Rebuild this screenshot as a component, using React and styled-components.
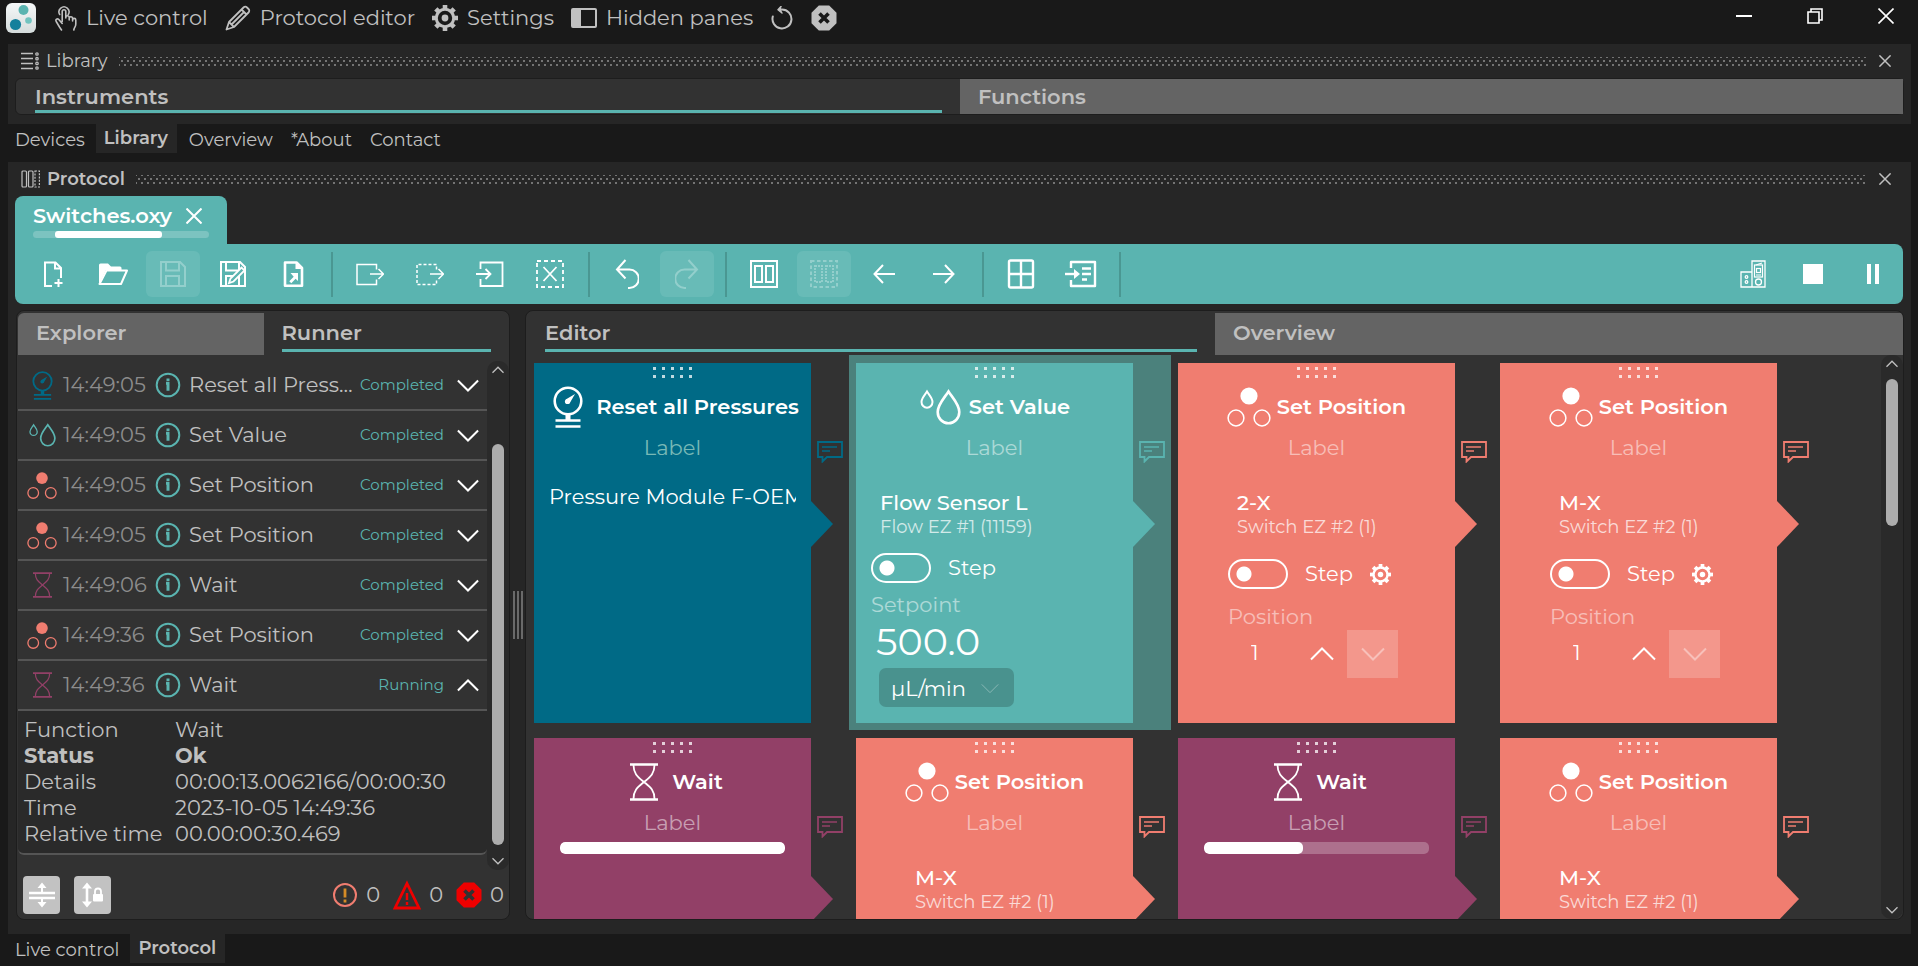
import React from "react";
import styled, { createGlobalStyle, css } from "styled-components";

const c = {
  window: "#191919",
  dock: "#262626",
  panel: "#323232",
  sunken: "#2a2a2a",
  edge: "#1d1d1d",
  tab: "#646464",
  text: "#c0c0c0",
  dim: "#8c8c8c",
  teal: "#5ab4b0",
  tealDark: "#4b817c",
  blue: "#006a86",
  salmon: "#f07d70",
  plum: "#924067",
};

const GlobalStyle = createGlobalStyle`
  *, *::before, *::after { box-sizing: border-box; }
  html, body, #root { height: 100%; }
  body {
    margin: 0;
    background: ${c.window};
    color: ${c.text};
    font: 400 21px/26px Montserrat, Inter, "Open Sans", sans-serif;
    overflow: hidden;
  }
  button, input, select { font: inherit; color: inherit; margin: 0; }
  button { border: 0; padding: 0; background: none; cursor: pointer; }
  h2, h3, p, ul { margin: 0; padding: 0; font: inherit; }
  svg { display: block; flex: none; }
`;

/* ---------- icons ---------- */

const Svg = ({ w = 26, h = w, vb = `0 0 ${w} ${h}`, sw = 2, children, ...rest }) => (
  <svg width={w} height={h} viewBox={vb} fill="none" stroke="currentColor" strokeWidth={sw} aria-hidden="true" {...rest}>
    {children}
  </svg>
);

const Logo = () => (
  <svg width="30" height="30" viewBox="0 0 30 30" aria-hidden="true">
    <defs>
      <linearGradient id="logoPlate" x1="0" y1="0" x2="0" y2="1">
        <stop offset="0" stopColor="#f6f8f8" />
        <stop offset="1" stopColor="#d5dcdc" />
      </linearGradient>
    </defs>
    <rect width="30" height="30" rx="6" fill="url(#logoPlate)" />
    <circle cx="17.500" cy="7" r="5" fill="#5ab4b0" />
    <circle cx="22.500" cy="17.500" r="3.300" fill="#71c3bf" />
    <circle cx="9.500" cy="21.500" r="5.600" fill="#14809c" />
  </svg>
);
const HandIcon = () => (
  <Svg w={22} h={26} sw={1.600} strokeLinecap="round" strokeLinejoin="round">
    <path d="M4.700 9.500a5 5 0 1 1 8.600 0" />
    <path d="M7.200 16.500V6.500a1.800 1.800 0 0 1 3.600 0V13M10.800 12.500a1.700 1.700 0 0 1 3.400 0V15M14.200 13.500a1.700 1.700 0 0 1 3.400 0V16M17.600 15a1.600 1.600 0 0 1 3.200 0v4c0 3-1.500 3-2 6M7.200 18.500 3.800 14.500c-1.500-1.500-3.600 0-2.600 2L4.500 22l2 3" />
  </Svg>
);
const PencilIcon = () => (
  <Svg w={26} h={26} sw={1.800} strokeLinejoin="round">
    <path d="M1.500 24.500l2.500-7.500L18.500 2.500c1-1 2.500-1 3.500 0l1.500 1.500c1 1 1 2.500 0 3.500L9 22zM4 17l5 5M16.500 4.500l5 5M6.500 19.500 19.500 6.500" />
  </Svg>
);
const GearIcon = ({ size = 26 }) => (
  <Svg w={size} vb="0 0 26 26" sw={3}>
    <circle cx="13" cy="13" r="8.700" />
    <circle cx="13" cy="13" r="3.400" fill="currentColor" stroke="none" />
    {[0, 45, 90, 135, 180, 225, 270, 315].map((a) => (
      <path key={a} d="M13 0v4" strokeWidth="4.600" transform={`rotate(${a} 13 13)`} />
    ))}
  </Svg>
);
const PanesIcon = () => (
  <Svg w={26} h={20}>
    <rect x="1" y="1" width="24" height="18" rx="1" />
    <path d="M2 2h7v16H2z" fill="currentColor" />
  </Svg>
);
const RestoreIcon = () => (
  <Svg w={24} h={24} strokeLinecap="round">
    <path d="M12 3.500a9.500 9.500 0 1 1-9.200 7" />
    <path d="M11 .5 8 3.700l4 3.300" fill="currentColor" strokeWidth="1.500" strokeLinejoin="round" />
  </Svg>
);
const OctXIcon = ({ cut = c.window, size = 26 }) => (
  <Svg w={size} vb="0 0 26 26">
    <path d="M7.800.5h10.400l7.300 7.300v10.400l-7.300 7.300H7.800L.5 18.200V7.800z" fill="currentColor" stroke="none" />
    <path d="M8.500 8.500l9 9m0-9-9 9" stroke={cut} strokeWidth="3.600" />
  </Svg>
);
const CrossIcon = ({ size = 12, sw = 1.500 }) => (
  <Svg w={size} vb="0 0 16 16" sw={(sw * 16) / size}>
    <path d="M.5.5l15 15m0-15-15 15" />
  </Svg>
);
const LibraryIcon = () => (
  <Svg w={18} h={18} sw={1.300}>
    <path d="M0 1.500h12M0 6.500h12M0 11.500h12M0 16.500h12" />
    <circle cx="16" cy="2" r="1.200" /><circle cx="16" cy="6.700" r="1.200" /><circle cx="16" cy="11.400" r="1.200" /><circle cx="16" cy="16" r="1.200" />
  </Svg>
);
const ProtocolIcon = () => (
  <Svg w={19} h={18} sw={1.200}>
    <rect x="1" y="1" width="4.500" height="16" rx="1" />
    <rect x="7.500" y="1" width="4.500" height="16" rx="1" />
    <rect x="14" y="1" width="4.400" height="16" strokeDasharray="2 1.300" />
  </Svg>
);
const Chevron = ({ up, w = 22, sw = 2 }) => (
  <Svg w={w} h={w / 2 + 2} vb="0 0 24 14" sw={(sw * 24) / w}>
    <path d={up ? "M1 12.500l11-11 11 11" : "M1 1.500l11 11 11-11"} />
  </Svg>
);
const NewIcon = () => (
  <Svg w={28}>
    <path d="M13 26H6V2.500h10.500L22 8v10M16 3v5.500h6M19.500 19v8M15.500 23h8" />
  </Svg>
);
const OpenIcon = () => (
  <Svg w={30} h={24}>
    <path d="M1 22V3q0-1.500 1.500-1.500H10l3 3h9q1.500 0 1.500 1.500v2H8z" fill="currentColor" stroke="none" />
    <path d="M1.500 22 8.500 8.500H29L23 22z" strokeLinejoin="round" />
  </Svg>
);
const SaveIcon = ({ edit }) => (
  <Svg w={28}>
    <path d="M2 2h19l5 5v19H2zM7 2v8.500h13V2M7 26V16h13v10" />
    {edit && <path d="M10 23l1.500-4.500L22.500 7.500l3 3L14.500 21.500z" fill={c.teal} strokeWidth="1.800" />}
  </Svg>
);
const ExportDocIcon = () => (
  <Svg w={28} sw={2.600}>
    <path d="M6 2.500h11.500L23 8v17.700H6z" strokeLinejoin="round" />
    <path d="M16.500 2.500V9H23z" fill="currentColor" stroke="none" />
    <path d="M11.500 13H19v8l-2.400-2.300-4.300 4.600-2-2 4.400-4.600z" fill="currentColor" stroke="none" />
  </Svg>
);
const SendIcon = ({ dashed }) => (
  <Svg w={28} sw={1.500}>
    <path d="M20.500 9.500v-5H1v20h19.500v-5" strokeDasharray={dashed ? "3 2" : undefined} />
    <path d="M14 14h13M22.500 9l5 5-5 5" />
  </Svg>
);
const InsertIcon = () => (
  <Svg w={28} sw={1.800}>
    <path d="M4.500 9V2.500h22V26h-22v-7" />
    <path d="M0 14h14M9.500 9l5 5-5 5" />
  </Svg>
);
const DeleteIcon = () => (
  <Svg w={28} sw={1.800}>
    <rect x="1" y="1" width="26" height="26" strokeDasharray="4 3" />
    <path d="M7.500 7l13 14M20.500 7l-13 14" />
  </Svg>
);
const UndoIcon = ({ flip }) => (
  <Svg w={24} h={30} sw={2} transform={flip ? "scale(-1 1)" : undefined}>
    <path d="M10.500 1 2 10.500l8.500 9M2 10.500h12.500a8.500 8.500 0 1 1 0 18.500H13" />
  </Svg>
);
const ColumnsIcon = ({ dashed }) => (
  <Svg w={28} sw={2}>
    <rect x="1" y="1" width="26" height="26" strokeDasharray={dashed ? "3.500 2.500" : undefined} />
    <path d="M5 6h7v16H5zM16 6h7v16h-7z" strokeDasharray={dashed ? "2 1" : undefined} />
  </Svg>
);
const ArrowIcon = ({ right }) => (
  <Svg w={22} h={20} sw={2} transform={right ? "scale(-1 1)" : undefined}>
    <path d="M10 1 1.500 10l8.500 9M1.500 10H22" />
  </Svg>
);
const GridIcon = () => (
  <Svg w={28} h={30} sw={2.400}>
    <rect x="2" y="1.500" width="24" height="27" rx="1.500" />
    <path d="M14 2v26M2 15h24" />
  </Svg>
);
const IntoListIcon = () => (
  <Svg w={32} h={28} sw={2.400}>
    <path d="M6 8V2h24v24H6v-6" strokeLinejoin="round" />
    <path d="M0 14h10" />
    <path d="M9 9l6 5-6 5z" fill="currentColor" stroke="none" />
    <path d="M17 8.500h9M17 14h9M17 19.500h5" />
  </Svg>
);
const DevicesIcon = () => (
  <Svg w={26} h={28} sw={1.300}>
    <path d="M12 1h13v26H12zM1 12h11v15H1z" />
    <rect x="14.500" y="5" width="8" height="12" strokeWidth="1.200" />
    <rect x="16.500" y="8.500" width="4" height="4" strokeWidth="1.200" />
    <path d="M16 5l6-2M16 15h5" strokeWidth="1.200" />
    <circle cx="18.500" cy="22" r="3" />
    <circle cx="6.500" cy="17" r="1.300" /><circle cx="6.500" cy="22" r="1.300" />
  </Svg>
);
const StopIcon = () => <Svg w={20}><path d="M0 0h20v20H0z" fill="currentColor" stroke="none" /></Svg>;
const PauseIcon = () => <Svg w={12} h={20}><path d="M0 0h4v20H0zM8 0h4v20H8z" fill="currentColor" stroke="none" /></Svg>;
const InfoIcon = () => (
  <Svg w={26} sw={2}>
    <circle cx="13" cy="13" r="11.300" />
    <path d="M11 11.200h2v7.600M13 6.500v2.600" strokeWidth="3" />
  </Svg>
);

const GaugeIcon = ({ big }) => (
  <Svg w={big ? 30 : 21} h={big ? 42 : 29} vb="0 0 30 42" sw={2.600}>
    <circle cx="15" cy="15" r="13.300" />
    <circle cx="14.500" cy="15.500" r="2.600" fill="currentColor" stroke="none" />
    <path d="M12.700 13.500 22 8l-5.500 9.500z" fill="currentColor" stroke="none" />
    <path d="M15 28v6" strokeWidth="5" />
    <path d="M2.500 34.500h25M2.500 40.500h25" />
  </Svg>
);
const DropsIcon = ({ big }) => (
  <Svg w={big ? 41 : 27} h={big ? 36 : 24} vb="0 0 41 36" sw={2.600}>
    <path d="M28.500 2.500c4 6.200 10.800 13 10.800 20.500a10.800 11.300 0 0 1-21.600 0c0-7.500 6.800-14.300 10.800-20.500z" />
    <path d="M7 2.500c2 3.500 5.500 6.500 5.500 10.500a5.500 5.700 0 0 1-11 0c0-4 3.500-7 5.500-10.500z" strokeWidth="2" />
  </Svg>
);
const ValveIcon = ({ big }) => (
  <Svg w={big ? 44 : 30} h={big ? 40 : 27} vb="0 0 44 40" sw={big ? 1.500 : 1.900}>
    <circle cx="22" cy="9" r="8.600" fill="currentColor" stroke="none" />
    <circle cx="9" cy="31" r="7.900" />
    <circle cx="35" cy="31" r="7.900" />
  </Svg>
);
const HourglassIcon = ({ big }) => (
  <Svg w={big ? 28 : 19} h={big ? 38 : 26} vb="0 0 28 38" sw={1.800}>
    <path d="M0 1.500h28M0 36.500h28" strokeWidth="2.600" />
    <path d="M3.500 2c0 9 4.500 12 10.500 17 6-5 10.500-8 10.500-17M3.500 36c0-9 4.500-12 10.500-17 6 5 10.500 8 10.500 17" />
  </Svg>
);
const CommentIcon = () => (
  <Svg w={26} h={22} sw={1.800}>
    <path d="M1 1h24v15H10l-4.500 4.500V16H1z" />
    <path d="M5 6h15M5 10h8" strokeWidth="1.600" />
  </Svg>
);
const CollapseIcon = () => (
  <Svg w={26}>
    <path d="M0 11h26M0 16h26" strokeWidth="2.400" />
    <path d="M13 5v5M13 17v5" />
    <path d="M8.500 6 13 .5 17.500 6zM8.500 20l4.500 5.500L17.500 20z" fill="currentColor" stroke="none" />
  </Svg>
);
const ScrollLockIcon = () => (
  <Svg w={22} h={26}>
    <path d="M5 5v16" strokeWidth="2.600" />
    <path d="M0 6.500 5 .5l5 6zM0 19.500l5 6 5-6z" fill="currentColor" stroke="none" />
    <rect x="11" y="12" width="10" height="7.500" rx="1" fill="currentColor" stroke="none" />
    <path d="M13 13V9.500a3 3 0 0 1 6 0V13" strokeWidth="1.800" />
  </Svg>
);
const AlertIcon = () => (
  <Svg w={26}>
    <circle cx="13" cy="13" r="11" />
    <path d="M13 6.500v9M13 17.500v3" stroke="#d58b26" strokeWidth="2.800" />
  </Svg>
);
const TriangleIcon = () => (
  <Svg w={28} h={30} sw={2.800}>
    <path d="M14 3.500 26 28H2z" />
    <path d="M14 13v7M14 22v3" strokeWidth="2.400" />
  </Svg>
);

/* ---------- shell ---------- */

const Shell = styled.div`
  height: 100vh;
  display: flex;
  flex-direction: column;
`;
const TitleBar = styled.header`
  height: 44px;
  flex: none;
  display: flex;
  align-items: flex-start;
  padding: 3px 20px 0 6px;
`;
const Menu = styled.nav`
  display: flex;
  align-items: center;
  gap: 17px;
  height: 30px;
  margin-left: 19px;
  flex: 1;
`;
const MenuButton = styled.button`
  display: flex;
  align-items: center;
  gap: 9px;
  white-space: nowrap;
`;
const WindowButtons = styled.div`
  display: flex;
  height: 26px;
  align-items: center;
  gap: 55px;
  color: #fff;
  padding-right: 4px;
`;
const Dock = styled.section`
  margin: 0 7px 0 8px;
  padding: 0 7px;
  background: ${c.dock};
  display: flex;
  flex-direction: column;
  ${(p) => (p.$fill ? "flex: 1; min-height: 0; padding-bottom: 14px;" : "flex: none; padding-bottom: 9px;")}
`;
const DockHeader = styled.header`
  height: 34px;
  flex: none;
  display: flex;
  align-items: center;
  gap: 7px;
  padding: 0 13px 0 6px;
  font-size: 18px;
`;
const DockTitle = styled.h2`
  font-weight: ${(p) => (p.$strong ? 600 : 400)};
`;
const Grip = styled.span`
  flex: 1;
  height: 9px;
  margin: 0 6px 0 4px;
  background:
    radial-gradient(circle, #747474 1px, transparent 1px) 0 0 / 6px 8px,
    radial-gradient(circle, #747474 1px, transparent 1px) 3px 4px / 6px 8px;
`;
const DockTabs = styled.nav`
  flex: none;
  display: flex;
  align-items: flex-start;
  padding-left: 6px;
  height: ${(p) => p.$height}px;
  font-size: 18px;
`;
const DockTab = styled.a`
  display: block;
  color: ${c.text};
  text-decoration: none;
  height: 29px;
  ${(p) =>
    p.$active
      ? css`
          background: ${c.dock};
          font-weight: 600;
          line-height: 28px;
          padding: 0 9px 0 8px;
          margin: 0 3px 0 2px;
        `
      : css`
          line-height: 32px;
          padding: 0 9px;
        `}
`;

const TabRow = styled.div`
  flex: none;
  display: flex;
  height: ${(p) => p.$height}px;
`;
const Tab = styled.button`
  flex: 1 1 0;
  display: flex;
  align-items: flex-start;
  text-align: left;
  padding: 0 18px;
  font-weight: 600;
  background: ${(p) => (p.$active ? "none" : c.tab)};
  &:first-child { border-top-left-radius: 6px; }
  span {
    flex: 1;
    display: flex;
    align-items: center;
    height: calc(100% - ${(p) => p.$inset}px);
    border-bottom: 3px solid ${(p) => (p.$active ? c.teal : "transparent")};
    padding-top: 4px;
  }
`;
const LibraryTabs = styled.div`
  background: ${c.panel};
  border: 1px solid ${c.edge};
  border-radius: 6px;
  padding-left: 1px;
`;

/* ---------- protocol file tab and toolbar ---------- */

const FileTab = styled.div`
  flex: none;
  width: 212px;
  height: 48px;
  padding: 7px 18px;
  border-radius: 8px 8px 0 0;
  background: ${c.teal};
  color: #fff;
`;
const FileTabTop = styled.div`
  display: flex;
  align-items: center;
  gap: 14px;
  font-weight: 600;
`;
const Track = styled.div`
  height: 7px;
  margin-top: 2px;
  border-radius: 4px;
  background: #7cc3c0;
  padding-left: 22px;
`;
const TrackFill = styled.div`
  width: 107px;
  height: 7px;
  border-radius: 3px;
  background: #fff;
`;
const Toolbar = styled.div`
  flex: none;
  height: 60px;
  margin-right: 1px;
  padding: 0 3px 0 11px;
  display: flex;
  align-items: center;
  gap: 6px;
  border-radius: 0 8px 8px 8px;
  background: ${c.teal};
  color: #fff;
`;
const ToolButton = styled.button`
  width: 54px;
  height: 46px;
  display: grid;
  place-items: center;
  border-radius: 6px;
  &:disabled {
    background: #68bbb7;
    color: #93cfcc;
  }
`;
const ToolRule = styled.i`
  width: 2px;
  height: 45px;
  margin: 0 4px 0 5px;
  background: #4a9792;
`;
const Spacer = styled.div`
  flex: 1;
`;

/* ---------- workspace ---------- */

const Workspace = styled.div`
  flex: 1;
  min-height: 0;
  display: flex;
  padding: 6px 0 0 1px;
`;
const Panel = styled.section`
  display: flex;
  flex-direction: column;
  min-height: 0;
  min-width: 0;
  background: ${c.panel};
  border: 1px solid ${c.edge};
  border-radius: 8px;
  padding: 2px 0 0 1px;
  overflow: hidden;
  ${(p) => (p.$width ? `flex: 0 0 ${p.$width}px;` : "flex: 1;")}
`;
const Splitter = styled.div`
  width: 15px;
  flex: none;
  display: flex;
  justify-content: center;
  align-items: center;
  gap: 2px;
  i {
    width: 2px;
    height: 48px;
    background: #6a6a6a;
  }
`;
const ScrollArea = styled.div`
  flex: 1;
  min-height: 0;
  display: flex;
`;
const Bar = styled.div`
  width: 22px;
  flex: none;
  margin-top: ${(p) => p.$top}px;
  padding: 5px 0;
  display: flex;
  flex-direction: column;
  align-items: center;
  justify-content: space-between;
  background: ${c.sunken};
  border-radius: 10px;
`;
const BarTrack = styled.div`
  flex: 1;
  padding-top: ${(p) => p.$offset}px;
`;
const Thumb = styled.div`
  width: 12px;
  height: ${(p) => p.$size}px;
  border-radius: 6px;
  background: #adadad;
`;

const LogList = styled.ul`
  flex: 1;
  min-width: 0;
  list-style: none;
  padding-top: 6px;
`;
const LogItem = styled.li`
  height: 50px;
  border-bottom: 2px solid #555;
  display: grid;
  grid-template-columns: 45px 92px 34px minmax(0, 1fr) auto 43px;
  align-items: center;
`;
const LogIcon = styled.span`
  display: grid;
  place-items: center;
  padding-left: 3px;
  color: ${(p) => p.$color};
`;
const LogTime = styled.time`
  color: ${c.dim};
`;
const LogInfo = styled.span`
  color: ${c.teal};
`;
const LogName = styled.span`
  overflow: hidden;
  text-overflow: ellipsis;
  white-space: nowrap;
`;
const LogState = styled.span`
  padding-left: 5px;
  font-size: 15px;
  color: ${c.teal};
`;
const LogToggle = styled.button`
  color: #fff;
  display: grid;
  justify-content: end;
  padding-right: 8px;
`;
const Details = styled.li`
  height: 144px;
  padding: 6px 0 0 6px;
  background: ${c.sunken};
  border-bottom: 2px solid #555;
  border-radius: 0 0 6px 6px;
  table { border-collapse: collapse; }
  th, td { padding: 0; height: 26px; text-align: left; font-weight: inherit; white-space: nowrap; }
  th { width: 151px; }
`;
const DetailRow = styled.tr`
  font-weight: ${(p) => (p.$strong ? 700 : 400)};
`;
const LogFooter = styled.footer`
  flex: none;
  height: 49px;
  padding: 0 5px;
  display: flex;
  align-items: center;
`;
const SquareButton = styled.button`
  width: 37px;
  height: 38px;
  margin-right: 14px;
  display: grid;
  place-items: center;
  border-radius: 4px;
  background: #c2c2c2;
  color: #fff;
`;
const Counter = styled.span`
  display: flex;
  align-items: center;
  gap: 8px;
  margin-left: 13px;
  svg { color: ${(p) => p.$color}; }
`;

/* ---------- step cards ---------- */

const Board = styled.div`
  flex: 1;
  min-width: 0;
  min-height: 0;
  overflow: hidden;
  display: grid;
  grid-template-columns: repeat(auto-fill, 322px);
  grid-auto-rows: 375px;
`;
const Cell = styled.div`
  display: flex;
  padding: 8px 0 7px 7px;
  color: ${(p) => p.$color};
  background: ${(p) => (p.$selected ? c.tealDark : "none")};
`;
const Card = styled.article`
  width: 277px;
  height: 360px;
  flex: none;
  background: ${(p) => p.$color};
  color: #fff;
`;
const Handle = styled.div`
  width: 40px;
  height: 12px;
  margin: 4px auto 7px;
  background: conic-gradient(from 270deg at 3px 3px, rgba(255, 255, 255, 0.75) 90deg, transparent 0) 0 0 / 9px 8px;
`;
const CardTitle = styled.h3`
  height: 42px;
  display: flex;
  align-items: center;
  justify-content: center;
  gap: 6px;
  font-weight: 600;
  white-space: nowrap;
`;
const CardIcon = styled.span`
  width: 44px;
  display: grid;
  place-items: center;
`;
const LabelInput = styled.input`
  display: block;
  width: 100%;
  height: 30px;
  margin-top: 4px;
  padding: 0;
  border: 0;
  background: none;
  text-align: center;
  &::placeholder { color: ${(p) => p.$tint || "rgba(255, 255, 255, 0.5)"}; opacity: 1; }
`;
const CardBody = styled.div`
  padding: ${(p) => p.$top}px 15px 0 ${(p) => p.$left}px;
`;
const Clipped = styled.p`
  overflow: hidden;
  white-space: nowrap;
`;
const Device = styled.div`
  padding-left: 9px;
  strong { display: block; font-weight: 500; line-height: 24px; }
  span { display: block; font-size: 18px; line-height: 25px; opacity: 0.72; }
`;
const StepRow = styled.label`
  display: flex;
  align-items: center;
  gap: 17px;
  margin-top: ${(p) => p.$top}px;
`;
const Switch = styled.input`
  appearance: none;
  width: 60px;
  height: 30px;
  border: 2px solid #fff;
  border-radius: 15px;
  background: radial-gradient(circle at 14px 13px, #fff 7px, transparent 8px);
`;
const FieldLabel = styled.label`
  display: block;
  margin-top: ${(p) => p.$top}px;
  opacity: 0.5;
`;
const BigInput = styled.input`
  display: block;
  width: 150px;
  height: 44px;
  margin-top: 1px;
  padding: 0 0 0 5px;
  border: 0;
  background: none;
  font-size: 38px;
`;
const UnitBox = styled.div`
  position: relative;
  width: 135px;
  margin: 5px 0 0 8px;
  svg { position: absolute; right: 15px; top: 15px; opacity: 0.35; }
`;
const UnitSelect = styled.select`
  appearance: none;
  width: 100%;
  height: 39px;
  padding: 2px 12px 0;
  border: 0;
  border-radius: 7px;
  background: #49928e;
  color: #fff;
`;
const Stepper = styled.div`
  display: flex;
  align-items: center;
  height: 48px;
  input {
    width: 68px;
    padding: 0 0 3px 23px;
    border: 0;
    background: none;
  }
`;
const StepButton = styled.button`
  width: 51px;
  height: 48px;
  display: grid;
  place-items: center;
  &:disabled { background: rgba(255, 255, 255, 0.2); color: rgba(255, 255, 255, 0.4); }
`;
const WaitBar = styled.div`
  height: 12px;
  margin: 5px 26px 0;
  border-radius: 5px;
  overflow: hidden;
  background: rgba(255, 255, 255, 0.25);
`;
const WaitFill = styled.div`
  height: 12px;
  border-radius: 5px;
  background: #fff;
`;
const CardSide = styled.div`
  padding-top: 78px;
  display: flex;
  flex-direction: column;
  gap: 38px;
`;
const NoteButton = styled.button`
  margin-left: 6px;
`;
const Pointer = styled.i`
  width: 22px;
  height: 46px;
  background: currentColor;
  clip-path: polygon(0 0, 100% 50%, 0 100%);
`;

const kinds = {
  reset: { name: "Reset all Pressures", color: c.blue, tint: "#78b9b6", Icon: GaugeIcon },
  value: { name: "Set Value", color: c.teal, Icon: DropsIcon },
  position: { name: "Set Position", color: c.salmon, Icon: ValveIcon },
  wait: { name: "Wait", color: c.plum, Icon: HourglassIcon },
};

const ResetBody = () => (
  <CardBody $top={22} $left={15}>
    <Clipped>Pressure Module F-OEM</Clipped>
  </CardBody>
);

const ValueBody = ({ id }) => (
  <CardBody $top={29} $left={15}>
    <Device>
      <strong>Flow Sensor L</strong>
      <span>Flow EZ #1 (11159)</span>
    </Device>
    <StepRow $top={13}>
      <Switch type="checkbox" /> Step
    </StepRow>
    <FieldLabel $top={9} htmlFor={id}>Setpoint</FieldLabel>
    <BigInput id={id} defaultValue="500.0" />
    <UnitBox>
      <UnitSelect aria-label="Unit">
        <option>µL/min</option>
      </UnitSelect>
      <Chevron w={18} sw={1} />
    </UnitBox>
  </CardBody>
);

const PositionBody = ({ id, device }) => (
  <CardBody $top={29} $left={50}>
    <Device>
      <strong>{device}</strong>
      <span>Switch EZ #2 (1)</span>
    </Device>
    <StepRow $top={19}>
      <Switch type="checkbox" /> Step <GearIcon size={21} />
    </StepRow>
    <FieldLabel $top={15} htmlFor={id}>Position</FieldLabel>
    <Stepper>
      <input id={id} defaultValue="1" />
      <StepButton aria-label="Increase"><Chevron up w={24} sw={2} /></StepButton>
      <StepButton aria-label="Decrease" disabled><Chevron w={24} sw={2} /></StepButton>
    </Stepper>
  </CardBody>
);

const steps = [
  { kind: "reset" },
  { kind: "value", selected: true },
  { kind: "position", device: "2-X" },
  { kind: "position", device: "M-X" },
  { kind: "wait", progress: 100 },
  { kind: "position", device: "M-X" },
  { kind: "wait", progress: 44 },
  { kind: "position", device: "M-X" },
];

const StepCard = ({ step, id }) => {
  const { name, color, tint, Icon } = kinds[step.kind];
  return (
    <Cell $color={color} $selected={step.selected}>
      <Card $color={color}>
        <Handle />
        <CardTitle>
          <CardIcon><Icon big /></CardIcon>
          {name}
        </CardTitle>
        <LabelInput $tint={tint} placeholder="Label" aria-label={`${name} label`} />
        {step.kind === "reset" && <ResetBody />}
        {step.kind === "value" && <ValueBody id={id} />}
        {step.kind === "position" && <PositionBody id={id} device={step.device} />}
        {step.kind === "wait" && (
          <WaitBar>
            <WaitFill style={{ width: `${step.progress}%` }} />
          </WaitBar>
        )}
      </Card>
      <CardSide>
        <NoteButton aria-label="Comment"><CommentIcon /></NoteButton>
        <Pointer />
      </CardSide>
    </Cell>
  );
};

const log = [
  { kind: "reset", time: "14:49:05", state: "Completed" },
  { kind: "value", time: "14:49:05", state: "Completed" },
  { kind: "position", time: "14:49:05", state: "Completed" },
  { kind: "position", time: "14:49:05", state: "Completed" },
  { kind: "wait", time: "14:49:06", state: "Completed" },
  { kind: "position", time: "14:49:36", state: "Completed" },
  { kind: "wait", time: "14:49:36", state: "Running", open: true },
];

const details = [
  ["Function", "Wait"],
  ["Status", "Ok", true],
  ["Details", "00:00:13.0062166/00:00:30"],
  ["Time", "2023-10-05 14:49:36"],
  ["Relative time", "00.00:00:30.469"],
];

const tools = [
  ["New", <NewIcon />],
  ["Open", <OpenIcon />],
  ["Save", <SaveIcon />, true],
  ["Save as", <SaveIcon edit />],
  ["Export", <ExportDocIcon />],
  null,
  ["Copy step", <SendIcon />],
  ["Cut step", <SendIcon dashed />],
  ["Paste step", <InsertIcon />],
  ["Delete step", <DeleteIcon />],
  null,
  ["Undo", <UndoIcon />],
  ["Redo", <UndoIcon flip />, true],
  null,
  ["Group", <ColumnsIcon />],
  ["Ungroup", <ColumnsIcon dashed />, true],
  ["Move left", <ArrowIcon />],
  ["Move right", <ArrowIcon right />],
  null,
  ["Grid", <GridIcon />],
  ["Insert list", <IntoListIcon />],
  null,
];

const runTools = [
  ["Instruments", <DevicesIcon />],
  ["Stop", <StopIcon />],
  ["Pause", <PauseIcon />],
];

const Tool = ({ item: [label, icon, disabled] }) => (
  <ToolButton aria-label={label} disabled={disabled}>{icon}</ToolButton>
);

const ScrollBar = ({ top, offset, size }) => (
  <Bar $top={top}>
    <Chevron up w={12} sw={1.300} />
    <BarTrack $offset={offset}><Thumb $size={size} /></BarTrack>
    <Chevron w={12} sw={1.300} />
  </Bar>
);

const App = () => (
  <Shell>
    <GlobalStyle />
    <TitleBar>
      <Logo />
      <Menu>
        <MenuButton><HandIcon />Live control</MenuButton>
        <MenuButton><PencilIcon />Protocol editor</MenuButton>
        <MenuButton><GearIcon />Settings</MenuButton>
        <MenuButton><PanesIcon />Hidden panes</MenuButton>
        <MenuButton aria-label="Restore"><RestoreIcon /></MenuButton>
        <MenuButton aria-label="Abort"><OctXIcon /></MenuButton>
      </Menu>
      <WindowButtons>
        <button aria-label="Minimize"><Svg w={16}><path d="M0 8h16" /></Svg></button>
        <button aria-label="Restore down">
          <Svg w={16} sw={1.600}><path d="M1 4h11v11H1zM4 4V1h11v11h-3" /></Svg>
        </button>
        <button aria-label="Close"><CrossIcon size={16} sw={1.600} /></button>
      </WindowButtons>
    </TitleBar>

    <Dock>
      <DockHeader>
        <LibraryIcon />
        <DockTitle>Library</DockTitle>
        <Grip />
        <button aria-label="Close library"><CrossIcon /></button>
      </DockHeader>
      <LibraryTabs>
        <TabRow $height={35}>
          <Tab $active $inset={1}><span>Instruments</span></Tab>
          <Tab $inset={1}><span>Functions</span></Tab>
        </TabRow>
      </LibraryTabs>
    </Dock>
    <DockTabs $height={38} aria-label="Library panes">
      <DockTab href="#devices">Devices</DockTab>
      <DockTab href="#library" $active>Library</DockTab>
      <DockTab href="#overview">Overview</DockTab>
      <DockTab href="#about">*About</DockTab>
      <DockTab href="#contact">Contact</DockTab>
    </DockTabs>

    <Dock $fill>
      <DockHeader>
        <ProtocolIcon />
        <DockTitle $strong>Protocol</DockTitle>
        <Grip />
        <button aria-label="Close protocol"><CrossIcon /></button>
      </DockHeader>
      <FileTab>
        <FileTabTop>
          Switches.oxy
          <button aria-label="Close file"><CrossIcon size={16} sw={2} /></button>
        </FileTabTop>
        <Track><TrackFill /></Track>
      </FileTab>
      <Toolbar>
        {tools.map((t, i) => (t ? <Tool key={i} item={t} /> : <ToolRule key={i} />))}
        <Spacer />
        {runTools.map((t) => <Tool key={t[0]} item={t} />)}
      </Toolbar>

      <Workspace>
        <Panel $width={494}>
          <TabRow $height={42}>
            <Tab $inset={3}><span>Explorer</span></Tab>
            <Tab $active $inset={3}><span>Runner</span></Tab>
          </TabRow>
          <ScrollArea>
            <LogList>
              {log.map((e, i) => {
                const { name, color, Icon } = kinds[e.kind];
                return (
                  <LogItem key={i}>
                    <LogIcon $color={color}><Icon /></LogIcon>
                    <LogTime>{e.time}</LogTime>
                    <LogInfo><InfoIcon /></LogInfo>
                    <LogName>{name}</LogName>
                    <LogState>{e.state}</LogState>
                    <LogToggle aria-label={e.open ? "Collapse" : "Expand"}><Chevron up={e.open} /></LogToggle>
                  </LogItem>
                );
              })}
              <Details>
                <table>
                  <tbody>
                    {details.map(([k, v, strong]) => (
                      <DetailRow key={k} $strong={strong}>
                        <th scope="row">{k}</th>
                        <td>{v}</td>
                      </DetailRow>
                    ))}
                  </tbody>
                </table>
              </Details>
            </LogList>
            <ScrollBar top={6} offset={70} size={401} />
          </ScrollArea>
          <LogFooter>
            <SquareButton aria-label="Collapse all"><CollapseIcon /></SquareButton>
            <SquareButton aria-label="Lock scrolling"><ScrollLockIcon /></SquareButton>
            <Spacer />
            <Counter $color={c.salmon}><AlertIcon />0</Counter>
            <Counter $color="#ee0000"><TriangleIcon />0</Counter>
            <Counter $color="#ee0000"><OctXIcon cut={c.panel} />0</Counter>
          </LogFooter>
        </Panel>
        <Splitter><i /><i /><i /></Splitter>
        <Panel>
          <TabRow $height={42}>
            <Tab $active $inset={3}><span>Editor</span></Tab>
            <Tab $inset={3}><span>Overview</span></Tab>
          </TabRow>
          <ScrollArea>
            <Board>
              {steps.map((s, i) => <StepCard key={i} step={s} id={`field-${i}`} />)}
            </Board>
            <ScrollBar top={0} offset={11} size={147} />
          </ScrollArea>
        </Panel>
      </Workspace>
    </Dock>
    <DockTabs $height={32} aria-label="Main panes">
      <DockTab href="#live">Live control</DockTab>
      <DockTab href="#protocol" $active>Protocol</DockTab>
    </DockTabs>
  </Shell>
);

export default App;
